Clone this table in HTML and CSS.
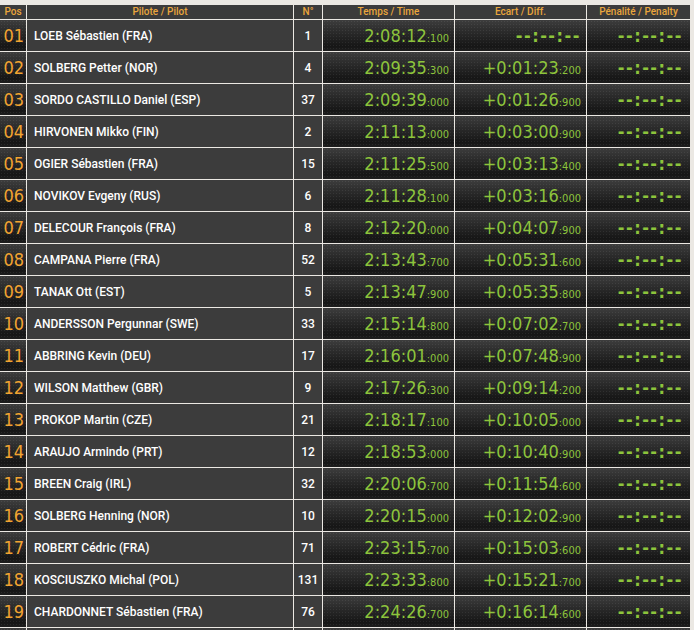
FILE: index.html
```html
<!DOCTYPE html>
<html lang="fr">
<head>
    <meta charset="UTF-8">
    <title>Classement</title>
    <link rel="stylesheet" href="styles.css">
</head>
<body>

    <table class="ranking">
        <colgroup>
            <col class="c-pos">
            <col class="c-pilot">
            <col class="c-num">
            <col class="c-time">
            <col class="c-diff">
            <col class="c-pen">
        </colgroup>
        <thead>
            <tr>
                <th>Pos</th>
                <th>Pilote / Pilot</th>
                <th>N°</th>
                <th>Temps / Time</th>
                <th>Ecart / Diff.</th>
                <th>Pénalité / Penalty</th>
            </tr>
        </thead>
        <tbody>
            <tr>
                <td class="pos">01</td>
                <td class="pilot">LOEB Sébastien (FRA)</td>
                <td class="num">1</td>
                <td class="digits">2:08:12<small>:100</small></td>
                <td class="digits empty">--:--:--</td>
                <td class="digits empty pen">--:--:--</td>
            </tr>
            <tr>
                <td class="pos">02</td>
                <td class="pilot">SOLBERG Petter (NOR)</td>
                <td class="num">4</td>
                <td class="digits">2:09:35<small>:300</small></td>
                <td class="digits">+0:01:23<small>:200</small></td>
                <td class="digits empty pen">--:--:--</td>
            </tr>
            <tr>
                <td class="pos">03</td>
                <td class="pilot">SORDO CASTILLO Daniel (ESP)</td>
                <td class="num">37</td>
                <td class="digits">2:09:39<small>:000</small></td>
                <td class="digits">+0:01:26<small>:900</small></td>
                <td class="digits empty pen">--:--:--</td>
            </tr>
            <tr>
                <td class="pos">04</td>
                <td class="pilot">HIRVONEN Mikko (FIN)</td>
                <td class="num">2</td>
                <td class="digits">2:11:13<small>:000</small></td>
                <td class="digits">+0:03:00<small>:900</small></td>
                <td class="digits empty pen">--:--:--</td>
            </tr>
            <tr>
                <td class="pos">05</td>
                <td class="pilot">OGIER Sébastien (FRA)</td>
                <td class="num">15</td>
                <td class="digits">2:11:25<small>:500</small></td>
                <td class="digits">+0:03:13<small>:400</small></td>
                <td class="digits empty pen">--:--:--</td>
            </tr>
            <tr>
                <td class="pos">06</td>
                <td class="pilot">NOVIKOV Evgeny (RUS)</td>
                <td class="num">6</td>
                <td class="digits">2:11:28<small>:100</small></td>
                <td class="digits">+0:03:16<small>:000</small></td>
                <td class="digits empty pen">--:--:--</td>
            </tr>
            <tr>
                <td class="pos">07</td>
                <td class="pilot">DELECOUR François (FRA)</td>
                <td class="num">8</td>
                <td class="digits">2:12:20<small>:000</small></td>
                <td class="digits">+0:04:07<small>:900</small></td>
                <td class="digits empty pen">--:--:--</td>
            </tr>
            <tr>
                <td class="pos">08</td>
                <td class="pilot">CAMPANA Pierre (FRA)</td>
                <td class="num">52</td>
                <td class="digits">2:13:43<small>:700</small></td>
                <td class="digits">+0:05:31<small>:600</small></td>
                <td class="digits empty pen">--:--:--</td>
            </tr>
            <tr>
                <td class="pos">09</td>
                <td class="pilot">TANAK Ott (EST)</td>
                <td class="num">5</td>
                <td class="digits">2:13:47<small>:900</small></td>
                <td class="digits">+0:05:35<small>:800</small></td>
                <td class="digits empty pen">--:--:--</td>
            </tr>
            <tr>
                <td class="pos">10</td>
                <td class="pilot">ANDERSSON Pergunnar (SWE)</td>
                <td class="num">33</td>
                <td class="digits">2:15:14<small>:800</small></td>
                <td class="digits">+0:07:02<small>:700</small></td>
                <td class="digits empty pen">--:--:--</td>
            </tr>
            <tr>
                <td class="pos">11</td>
                <td class="pilot">ABBRING Kevin (DEU)</td>
                <td class="num">17</td>
                <td class="digits">2:16:01<small>:000</small></td>
                <td class="digits">+0:07:48<small>:900</small></td>
                <td class="digits empty pen">--:--:--</td>
            </tr>
            <tr>
                <td class="pos">12</td>
                <td class="pilot">WILSON Matthew (GBR)</td>
                <td class="num">9</td>
                <td class="digits">2:17:26<small>:300</small></td>
                <td class="digits">+0:09:14<small>:200</small></td>
                <td class="digits empty pen">--:--:--</td>
            </tr>
            <tr>
                <td class="pos">13</td>
                <td class="pilot">PROKOP Martin (CZE)</td>
                <td class="num">21</td>
                <td class="digits">2:18:17<small>:100</small></td>
                <td class="digits">+0:10:05<small>:000</small></td>
                <td class="digits empty pen">--:--:--</td>
            </tr>
            <tr>
                <td class="pos">14</td>
                <td class="pilot">ARAUJO Armindo (PRT)</td>
                <td class="num">12</td>
                <td class="digits">2:18:53<small>:000</small></td>
                <td class="digits">+0:10:40<small>:900</small></td>
                <td class="digits empty pen">--:--:--</td>
            </tr>
            <tr>
                <td class="pos">15</td>
                <td class="pilot">BREEN Craig (IRL)</td>
                <td class="num">32</td>
                <td class="digits">2:20:06<small>:700</small></td>
                <td class="digits">+0:11:54<small>:600</small></td>
                <td class="digits empty pen">--:--:--</td>
            </tr>
            <tr>
                <td class="pos">16</td>
                <td class="pilot">SOLBERG Henning (NOR)</td>
                <td class="num">10</td>
                <td class="digits">2:20:15<small>:000</small></td>
                <td class="digits">+0:12:02<small>:900</small></td>
                <td class="digits empty pen">--:--:--</td>
            </tr>
            <tr>
                <td class="pos">17</td>
                <td class="pilot">ROBERT Cédric (FRA)</td>
                <td class="num">71</td>
                <td class="digits">2:23:15<small>:700</small></td>
                <td class="digits">+0:15:03<small>:600</small></td>
                <td class="digits empty pen">--:--:--</td>
            </tr>
            <tr>
                <td class="pos">18</td>
                <td class="pilot">KOSCIUSZKO Michal (POL)</td>
                <td class="num">131</td>
                <td class="digits">2:23:33<small>:800</small></td>
                <td class="digits">+0:15:21<small>:700</small></td>
                <td class="digits empty pen">--:--:--</td>
            </tr>
            <tr>
                <td class="pos">19</td>
                <td class="pilot">CHARDONNET Sébastien (FRA)</td>
                <td class="num">76</td>
                <td class="digits">2:24:26<small>:700</small></td>
                <td class="digits">+0:16:14<small>:600</small></td>
                <td class="digits empty pen">--:--:--</td>
            </tr>
            <tr>
                <td class="pos"></td>
                <td class="pilot"></td>
                <td class="num"></td>
                <td class="digits"></td>
                <td class="digits"></td>
                <td class="digits"></td>
            </tr>
        </tbody>
    </table>

</body>
</html>
```

FILE: styles.css
```css
* {
    margin: 0;
    padding: 0;
    box-sizing: border-box;
}

body {
    background-color: #ebe8e3;
    font-family: Roboto, "Liberation Sans", sans-serif;
    overflow: hidden;
}

.ranking {
    table-layout: fixed;
    border-collapse: separate;
    border-spacing: 1px;
    margin: 4px 0 0 -1px;
    width: 692px;
}

.c-pos   { width: 26px; }
.c-pilot { width: 266px; }
.c-num   { width: 28px; }
.c-time  { width: 131px; }
.c-diff  { width: 131px; }
.c-pen   { width: 103px; }

/* entete */
.ranking th {
    height: 14px;
    background-color: #3b3b3b;
    color: #eaa63c;
    font-size: 10px;
    font-weight: 500;
    line-height: 14px;
    text-align: center;
    white-space: nowrap;
}

.ranking td {
    height: 31px;
    white-space: nowrap;
    overflow: hidden;
}

.pilot,
.num {
    background-color: #3c3c3c;
    color: #fff;
    font-size: 12px;
    font-weight: 500;
}

.pilot {
    padding-left: 7px;
}

.num {
    text-align: center;
}

/* cellules type afficheur */
.pos,
.digits {
    background:
        radial-gradient(circle, rgba(255,255,255,0.07) 0.7px, transparent 0.9px) 0 0 / 3px 3px,
        linear-gradient(#3d3d3d, #2c2c2c 35%, #161616 85%, #1e1e1e);
    font-family: "DejaVu Sans", sans-serif;
    font-stretch: condensed;
    font-size: 18px;
    text-align: right;
}

.pos {
    color: #f2a431;
    padding-right: 2px;
}

.digits {
    color: #8dc43c;
    padding-right: 5px;
}

.digits small {
    font-size: 11px;
}

.empty {
    font-weight: bold;
    letter-spacing: 1.5px;
    padding-right: 5px;
}

.pen {
    padding-right: 7px;
}
```
